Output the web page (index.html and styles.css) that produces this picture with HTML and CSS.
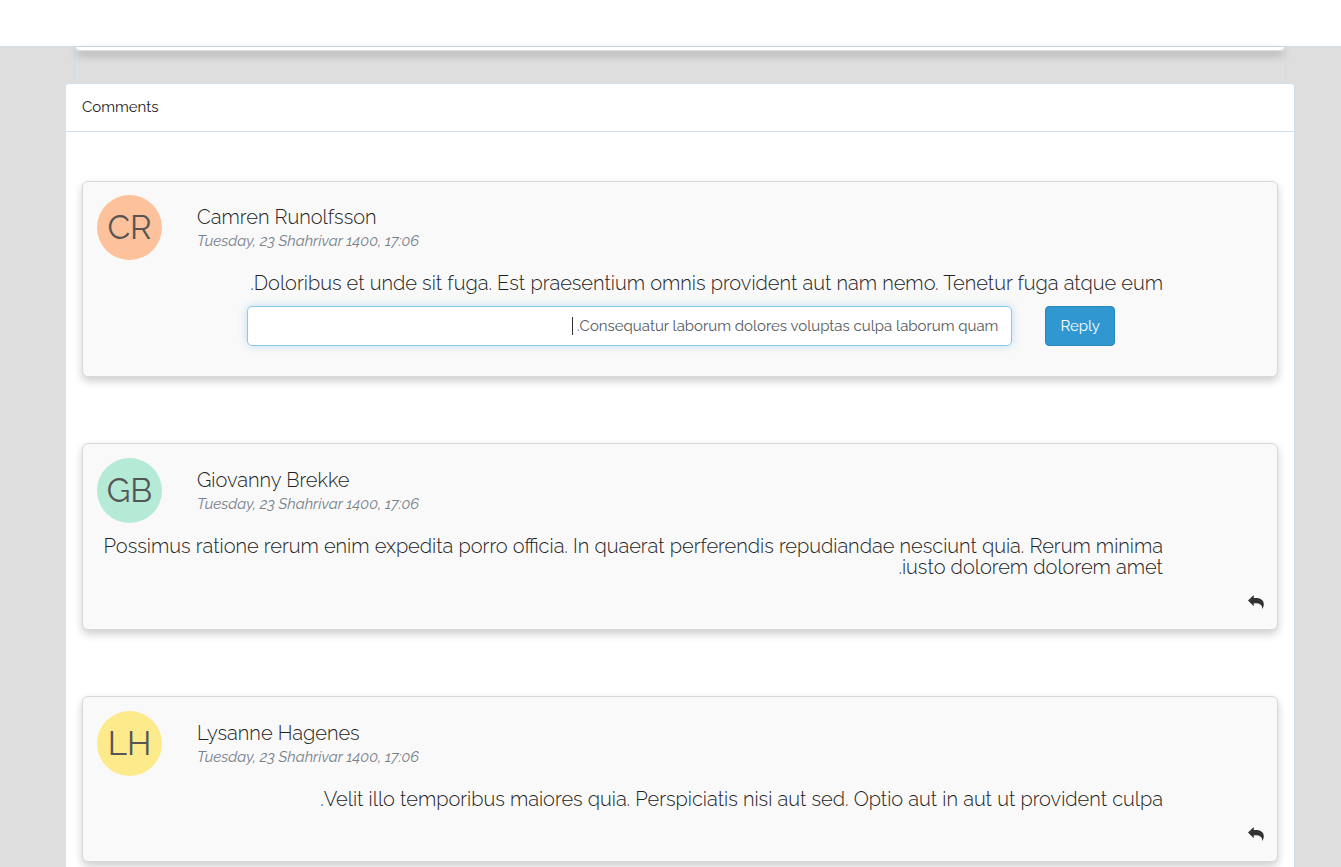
FILE: index.html
```html
<!DOCTYPE html>
<html lang="en">
<head>
<meta charset="utf-8">
<title>Comments</title>
<meta name="viewport" content="width=device-width, initial-scale=1">
<link rel="stylesheet" href="styles.css">
</head>
<body>
<header class="topbar"></header>
<main class="page">
  <section class="post">
    <div class="post-card"></div>
  </section>
  <section class="panel">
    <h1 class="panel-title">Comments</h1>
    <div class="comments">
      <article class="comment comment-replying">
        <div class="author">
          <div class="avatar avatar-orange">CR</div>
          <div class="meta">
            <h2 class="name">Camren Runolfsson</h2>
            <time class="date">Tuesday, 23 Shahrivar 1400, 17:06</time>
          </div>
        </div>
        <p class="text" dir="rtl">Doloribus et unde sit fuga. Est praesentium omnis provident aut nam nemo. Tenetur fuga atque eum.</p>
        <form class="reply-form">
          <div class="field">
            <input class="reply-input" type="text" dir="rtl" aria-label="Your reply" value="Consequatur laborum dolores voluptas culpa laborum quam. ">
            <span class="caret"></span>
          </div>
          <button class="reply-submit" type="button">Reply</button>
        </form>
      </article>

      <article class="comment">
        <div class="author">
          <div class="avatar avatar-green">GB</div>
          <div class="meta">
            <h2 class="name">Giovanny Brekke</h2>
            <time class="date">Tuesday, 23 Shahrivar 1400, 17:06</time>
          </div>
        </div>
        <p class="text" dir="rtl">Possimus ratione rerum enim expedita porro officia. In quaerat perferendis repudiandae nesciunt quia. Rerum minima iusto dolorem dolorem amet.</p>
        <button class="reply-toggle" type="button" aria-label="Reply">
          <svg width="16" height="14" viewBox="0 0 16 14"><path d="M0 5.500 5.800 0v3C11 2.600 15.800 4 15.800 9.200c0 1.800-.6 3.400-1.500 4.800.2-4.300-2.500-6-8.500-5.800v3z"/></svg>
        </button>
      </article>

      <article class="comment">
        <div class="author">
          <div class="avatar avatar-yellow">LH</div>
          <div class="meta">
            <h2 class="name">Lysanne Hagenes</h2>
            <time class="date">Tuesday, 23 Shahrivar 1400, 17:06</time>
          </div>
        </div>
        <p class="text" dir="rtl">Velit illo temporibus maiores quia. Perspiciatis nisi aut sed. Optio aut in aut ut provident culpa.</p>
        <button class="reply-toggle" type="button" aria-label="Reply">
          <svg width="16" height="14" viewBox="0 0 16 14"><path d="M0 5.500 5.800 0v3C11 2.600 15.800 4 15.800 9.200c0 1.800-.6 3.400-1.500 4.800.2-4.300-2.500-6-8.500-5.800v3z"/></svg>
        </button>
      </article>
    </div>
  </section>
</main>
</body>
</html>
```
FILE: styles.css
```css
* { box-sizing: border-box; }

body {
  margin: 0;
  background: #dedede;
  color: #222;
  font-family: Raleway, Lato, sans-serif;
  font-size: 15px;
  line-height: 24px;
}

.topbar {
  height: 47px;
  background: #fff;
  border-bottom: 1px solid #cedeea;
}

.page { padding: 0 46px 0 65px; }

.post {
  height: 36px;
  margin: 0 9px;
  padding: 0 1px;
  border: solid #cfdde8;
  border-width: 0 1px;
}

.post-card {
  height: 4px;
  background: #fff;
  border-bottom: 1px solid #ddd;
  border-radius: 0 0 5px 5px;
  box-shadow: 0 4px 8px rgba(0, 0, 0, .3);
}

.panel {
  background: #fff;
  border: 1px solid #cedeea;
  border-left-color: #d8e2ea;
  border-radius: 4px;
}

.panel-title {
  margin: 0;
  padding: 11px 16px 12px;
  border-bottom: 1px solid #cedeea;
  font-size: 15px;
  line-height: 24px;
  font-weight: 400;
}

.comments {
  display: flex;
  flex-direction: column;
  gap: 66px;
  padding: 49px 16px 66px;
}

.comment {
  display: flex;
  flex-direction: column;
  padding: 14px 13px 17px 14px;
  background: #f9f9f9;
  border: 1px solid #d8d8d8;
  border-radius: 6px;
  box-shadow: 0 4px 8px rgba(0, 0, 0, .2);
}
.comment-replying { padding-top: 13px; }

.author { display: flex; gap: 35px; }

.avatar {
  display: flex;
  align-items: center;
  justify-content: center;
  width: 65px;
  height: 65px;
  border-radius: 50%;
  color: #555;
  font-size: 33px;
}
.avatar-orange { background: #fdc19b; }
.avatar-green { background: #b5ead7; }
.avatar-yellow { background: #fdea8b; }

.meta { padding-top: 10px; }

.name {
  margin: 0;
  font-size: 20px;
  line-height: 24px;
  font-weight: 300;
}

.date {
  display: block;
  color: #77808a;
  font-size: 15px;
  font-style: italic;
}

.text {
  margin: 13px 101px 0 0;
  font-size: 20px;
  font-weight: 300;
  line-height: 21px;
}

.reply-form {
  display: flex;
  gap: 33px;
  margin: 12px 149px 13px 150px;
}

.field { position: relative; flex: 1; }

.reply-input {
  display: block;
  width: 100%;
  height: 40px;
  padding: 0 13px;
  border: 1px solid #90c8e8;
  border-radius: 5px;
  background: #fff;
  box-shadow: 0 0 8px rgba(52, 152, 219, .3);
  color: #555b62;
  font: inherit;
  outline: 0;
}

.caret {
  position: absolute;
  top: 11px;
  right: 439px;
  width: 1px;
  height: 18px;
  background: #333;
}

.reply-submit {
  height: 40px;
  padding: 0 14px;
  border: 1px solid #2a88bf;
  border-radius: 4px;
  background: #3097d1;
  color: #fff;
  font: inherit;
}

.reply-toggle {
  align-self: flex-end;
  display: flex;
  margin-top: 17px;
  padding: 0 0 3px;
  border: 0;
  background: none;
  color: #333;
}
.reply-toggle svg { fill: currentColor; }
```
